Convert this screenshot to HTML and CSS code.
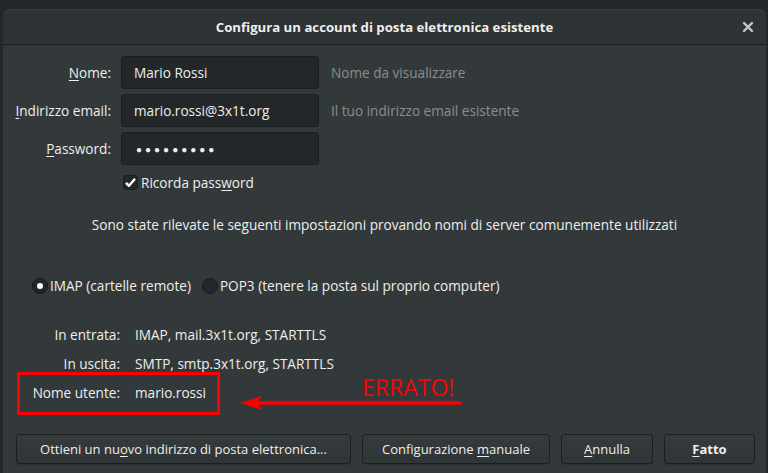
FILE: index.html
```html
<!DOCTYPE html>
<html lang="it">
<head>
    <meta charset="UTF-8">
    <title>Configura un account di posta elettronica esistente</title>
    <link rel="stylesheet" href="styles.css">
</head>
<body>
    <div class="window">
        <header class="titlebar">
            <h1>Configura un account di posta elettronica esistente</h1>
            <span class="close">
                <svg width="12" height="12" viewBox="0 0 12 12"><path d="M2 2 L10 10 M10 2 L2 10" stroke="#c9cbcb" stroke-width="2.4" stroke-linecap="round"/></svg>
            </span>
        </header>

        <main class="content">
            <div class="form">
                <label class="label"><u>N</u>ome:</label>
                <div class="entry">Mario Rossi</div>
                <span class="hint">Nome da visualizzare</span>

                <label class="label"><u>I</u>ndirizzo email:</label>
                <div class="entry">mario.rossi@3x1t.org</div>
                <span class="hint">Il tuo indirizzo email esistente</span>

                <label class="label"><u>P</u>assword:</label>
                <div class="entry password">&#9679;&#9679;&#9679;&#9679;&#9679;&#9679;&#9679;&#9679;&#9679;</div>
                <span class="hint"></span>
            </div>

            <div class="remember">
                <span class="checkbox">
                    <svg width="13" height="13" viewBox="0 0 13 13"><path d="M2 6.8 L5 9.8 L11 2.8" fill="none" stroke="#fff" stroke-width="2.4" stroke-linejoin="round"/></svg>
                </span>
                <span>Ricorda pass<u>w</u>ord</span>
            </div>

            <p class="notice">Sono state rilevate le seguenti impostazioni provando nomi di server comunemente utilizzati</p>

            <div class="protocols">
                <span class="radio checked"></span>
                <span>IMAP (cartelle remote)</span>
                <span class="radio second"></span>
                <span>POP3 (tenere la posta sul proprio computer)</span>
            </div>

            <div class="servers">
                <span class="label">In entrata:</span>
                <span>IMAP, mail.3x1t.org, STARTTLS</span>
                <span class="label">In uscita:</span>
                <span>SMTP, smtp.3x1t.org, STARTTLS</span>
                <span class="label">Nome utente:</span>
                <span>mario.rossi</span>
            </div>

            <div class="buttons">
                <button class="btn-new">Ottieni un nu<u>o</u>vo indirizzo di posta elettronica...</button>
                <button class="btn-manual">Configurazione <u>m</u>anuale</button>
                <button class="btn-cancel"><u>A</u>nnulla</button>
                <button class="btn-done"><u>F</u>atto</button>
            </div>

            <!-- annotazione -->
            <div class="mark-box"></div>
            <div class="mark-text">ERRATO!</div>
            <svg class="mark-arrow" width="222" height="16" viewBox="0 0 222 16">
                <path d="M14 8 H220" stroke="#ff0000" stroke-width="3.5" stroke-linecap="round"/>
                <path d="M0 8 L22 1 L17 8 L22 15 Z" fill="#ff0000"/>
            </svg>
        </main>
    </div>
</body>
</html>
```

FILE: styles.css
```css
body {
    margin: 0;
    background-color: #23272a;
    font-family: "Open Sans", "Noto Sans", sans-serif;
    font-size: 13.6px;
    color: #eeeeec;
    overflow: hidden;
}
u {
    text-decoration: underline;
    text-underline-offset: 2px;
}
.window {
    margin: 9px 2px 0 3px;
    height: 464px;
    background-color: #33393b;
    border-radius: 7px 7px 0 0;
    display: flex;
    flex-direction: column;
}
.titlebar {
    height: 35px;
    background-color: #2e3335;
    border-radius: 7px 7px 0 0;
    border-bottom: 1px solid #1a1d1e;
    box-shadow: inset 0 1px 0 #3a4042;
    display: flex;
    align-items: center;
    justify-content: center;
    position: relative;
}
.titlebar h1 {
    margin: 0;
    font-size: 13.2px;
    font-weight: bold;
    color: #eeeeec;
}
.close {
    position: absolute;
    right: 12px;
    top: 12px;
    display: flex;
}
.content {
    flex: 1;
    position: relative;
    display: flex;
    flex-direction: column;
}
.form {
    display: grid;
    grid-template-columns: 118px 198px 1fr;
    row-gap: 5px;
    margin-top: 11px;
}
.form .label {
    text-align: right;
    padding-right: 10px;
    align-self: center;
}
.entry {
    height: 33px;
    box-sizing: border-box;
    background-color: #232729;
    border: 1px solid #1c1f20;
    border-radius: 3px;
    padding: 0 12px;
    display: flex;
    align-items: center;
}
.password {
    font-size: 10px;
    letter-spacing: 3px;
    padding-left: 14px;
}
.hint {
    color: #8a8d8e;
    padding-left: 12px;
    align-self: center;
}
.remember {
    display: flex;
    align-items: center;
    gap: 3px;
    margin: 8px 0 0 120px;
}
.checkbox {
    width: 15px;
    height: 15px;
    box-sizing: border-box;
    background-color: #232729;
    border: 1px solid #1a1d1e;
    border-radius: 3px;
    display: flex;
    align-items: center;
    justify-content: center;
}
.notice {
    margin: 23px 0 0;
    text-align: center;
    line-height: 20px;
}
.protocols {
    display: flex;
    align-items: center;
    margin: 41px 0 0 29px;
    line-height: 20px;
}
.radio {
    width: 16px;
    height: 16px;
    box-sizing: border-box;
    border-radius: 50%;
    background-color: #232729;
    border: 1px solid #161819;
    margin-right: 2px;
    display: flex;
    align-items: center;
    justify-content: center;
}
.radio.checked::after {
    content: "";
    width: 6px;
    height: 6px;
    border-radius: 50%;
    background-color: #fff;
}
.radio.second {
    margin-left: 11px;
}
.servers {
    display: grid;
    grid-template-columns: 117px 1fr;
    column-gap: 15px;
    margin-top: 29px;
    line-height: 20px;
    row-gap: 9px;
}
.servers .label {
    text-align: right;
}
.buttons {
    display: flex;
    gap: 11px;
    margin: auto 0 9px 13px;
}
.buttons button {
    height: 30px;
    font-family: inherit;
    font-size: 13px;
    color: #eeeeec;
    background: linear-gradient(#353b3d, #2f3436);
    border: 1px solid #1b1f20;
    border-radius: 3px;
    box-shadow: 0 1px 0 rgba(0, 0, 0, 0.15);
    padding: 0;
}
.btn-new { width: 335px; }
.btn-manual { width: 188px; }
.btn-cancel { width: 92px; }
.btn-done { width: 91px; font-weight: bold; }
.mark-box {
    position: absolute;
    left: 14px;
    top: 327px;
    width: 203px;
    height: 43px;
    box-sizing: border-box;
    border: 3px solid #ff0000;
}
.mark-text {
    position: absolute;
    left: 359px;
    top: 326px;
    font-size: 23px;
    color: #ff0000;
}
.mark-arrow {
    position: absolute;
    left: 237px;
    top: 350px;
}
```
